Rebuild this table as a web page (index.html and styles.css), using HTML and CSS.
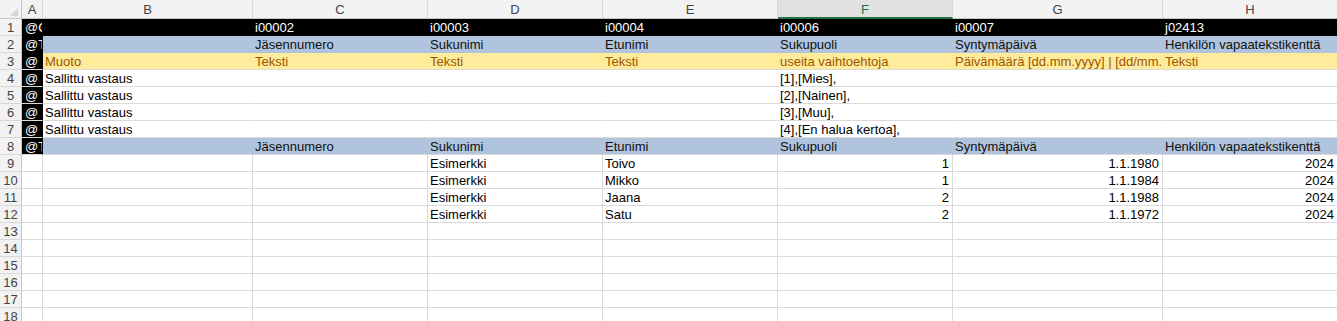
FILE: index.html
```html
<!DOCTYPE html>
<html lang="fi">
<head>
<meta charset="utf-8">
<title>Sheet</title>
<link rel="stylesheet" href="styles.css">
</head>
<body>
<div class="sheet">
  <div class="corner"><span class="tri"></span></div>
  <div class="ch">A</div><div class="ch">B</div><div class="ch">C</div><div class="ch">D</div><div class="ch">E</div><div class="ch sel">F</div><div class="ch">G</div><div class="ch">H</div>

  <div class="rh">1</div>
  <div class="c k a">@C</div><div class="c k"></div><div class="c k">i00002</div><div class="c k">i00003</div><div class="c k">i00004</div><div class="c k">i00006</div><div class="c k">i00007</div><div class="c k">j02413</div>

  <div class="rh">2</div>
  <div class="c k a">@T</div><div class="c b"></div><div class="c b">Jäsennumero</div><div class="c b">Sukunimi</div><div class="c b">Etunimi</div><div class="c b">Sukupuoli</div><div class="c b">Syntymäpäivä</div><div class="c b">Henkilön vapaatekstikenttä</div>

  <div class="rh">3</div>
  <div class="c k a sep">@</div><div class="c y">Muoto</div><div class="c y">Teksti</div><div class="c y">Teksti</div><div class="c y">Teksti</div><div class="c y">useita vaihtoehtoja</div><div class="c y">Päivämäärä [dd.mm.yyyy] | [dd/mm.</div><div class="c y">Teksti</div>

  <div class="rh">4</div>
  <div class="c k a sep">@</div><div class="c w">Sallittu vastaus</div><div class="c w"></div><div class="c w"></div><div class="c w"></div><div class="c w">[1],[Mies],</div><div class="c w"></div><div class="c w"></div>

  <div class="rh">5</div>
  <div class="c k a sep">@</div><div class="c w">Sallittu vastaus</div><div class="c w"></div><div class="c w"></div><div class="c w"></div><div class="c w">[2],[Nainen],</div><div class="c w"></div><div class="c w"></div>

  <div class="rh">6</div>
  <div class="c k a sep">@</div><div class="c w">Sallittu vastaus</div><div class="c w"></div><div class="c w"></div><div class="c w"></div><div class="c w">[3],[Muu],</div><div class="c w"></div><div class="c w"></div>

  <div class="rh">7</div>
  <div class="c k a sep">@</div><div class="c w">Sallittu vastaus</div><div class="c w"></div><div class="c w"></div><div class="c w"></div><div class="c w">[4],[En halua kertoa],</div><div class="c w"></div><div class="c w"></div>

  <div class="rh">8</div>
  <div class="c k a sep">@T</div><div class="c b sep"></div><div class="c b sep">Jäsennumero</div><div class="c b sep">Sukunimi</div><div class="c b sep">Etunimi</div><div class="c b sep">Sukupuoli</div><div class="c b sep">Syntymäpäivä</div><div class="c b sep">Henkilön vapaatekstikenttä</div>

  <div class="rh">9</div>
  <div class="c"></div><div class="c"></div><div class="c"></div><div class="c">Esimerkki</div><div class="c">Toivo</div><div class="c r">1</div><div class="c r">1.1.1980</div><div class="c r">2024</div>

  <div class="rh">10</div>
  <div class="c"></div><div class="c"></div><div class="c"></div><div class="c">Esimerkki</div><div class="c">Mikko</div><div class="c r">1</div><div class="c r">1.1.1984</div><div class="c r">2024</div>

  <div class="rh">11</div>
  <div class="c"></div><div class="c"></div><div class="c"></div><div class="c">Esimerkki</div><div class="c">Jaana</div><div class="c r">2</div><div class="c r">1.1.1988</div><div class="c r">2024</div>

  <div class="rh">12</div>
  <div class="c"></div><div class="c"></div><div class="c"></div><div class="c">Esimerkki</div><div class="c">Satu</div><div class="c r">2</div><div class="c r">1.1.1972</div><div class="c r">2024</div>

  <div class="rh">13</div>
  <div class="c"></div><div class="c"></div><div class="c"></div><div class="c"></div><div class="c"></div><div class="c"></div><div class="c"></div><div class="c"></div>

  <div class="rh">14</div>
  <div class="c"></div><div class="c"></div><div class="c"></div><div class="c"></div><div class="c"></div><div class="c"></div><div class="c"></div><div class="c"></div>

  <div class="rh">15</div>
  <div class="c"></div><div class="c"></div><div class="c"></div><div class="c"></div><div class="c"></div><div class="c"></div><div class="c"></div><div class="c"></div>

  <div class="rh">16</div>
  <div class="c"></div><div class="c"></div><div class="c"></div><div class="c"></div><div class="c"></div><div class="c"></div><div class="c"></div><div class="c"></div>

  <div class="rh">17</div>
  <div class="c"></div><div class="c"></div><div class="c"></div><div class="c"></div><div class="c"></div><div class="c"></div><div class="c"></div><div class="c"></div>

  <div class="rh">18</div>
  <div class="c"></div><div class="c"></div><div class="c"></div><div class="c"></div><div class="c"></div><div class="c"></div><div class="c"></div><div class="c"></div>
</div>
</body>
</html>
```

FILE: styles.css
```css
* {
  box-sizing: border-box;
}

html, body {
  margin: 0;
  background: #ffffff;
  overflow: hidden;
}

body {
  font-family: "Liberation Sans", Arial, sans-serif;
  font-size: 13px;
}

.sheet {
  display: grid;
  grid-template-columns: 22px 21px 210px 175px 175px 175px 175px 210px 175px;
  grid-template-rows: 19px;
  grid-auto-rows: 17px;
}

.corner {
  background: #f2f2f2;
  border-right: 1px solid #c6c6c6;
  border-bottom: 1px solid #c6c6c6;
  display: flex;
  justify-content: flex-end;
  align-items: flex-end;
  padding: 0 3px 2px 0;
}

.tri {
  width: 0;
  height: 0;
  border-left: 8px solid transparent;
  border-bottom: 8px solid #d4d4d4;
}

.ch {
  background: #f2f2f2;
  color: #444444;
  text-align: center;
  line-height: 20px;
  border-right: 1px solid #d9d9d9;
  border-bottom: 1px solid #c6c6c6;
  overflow: hidden;
}

.ch.sel {
  background: #e1e1e1;
  color: #217346;
  border-bottom: 2px solid #217346;
}

.rh {
  background: #f2f2f2;
  color: #444444;
  text-align: center;
  border-right: 1px solid #c6c6c6;
  border-bottom: 1px solid #d9d9d9;
  padding-top: 1px;
  line-height: 16px;
  overflow: hidden;
}

.c {
  border-right: 1px solid #dadada;
  border-bottom: 1px solid #dadada;
  padding: 1px 3px 0 2px;
  line-height: 16px;
  white-space: nowrap;
  overflow: hidden;
  color: #000000;
}

.a {
  padding-left: 3px;
}

.k {
  background: #000000;
  color: #ffffff;
  border-color: #000000;
}

.b {
  background: #b0c4de;
  color: #111111;
  border-right-color: #b0c4de;
  border-bottom-color: #b0c4de;
}

.y {
  background: #ffeb9c;
  color: #9c5700;
  border-right-color: #ffeb9c;
}

.w {
  border-right-color: #ffffff;
}

.sep {
  border-bottom-color: #dadada;
}

.r {
  text-align: right;
}
```
